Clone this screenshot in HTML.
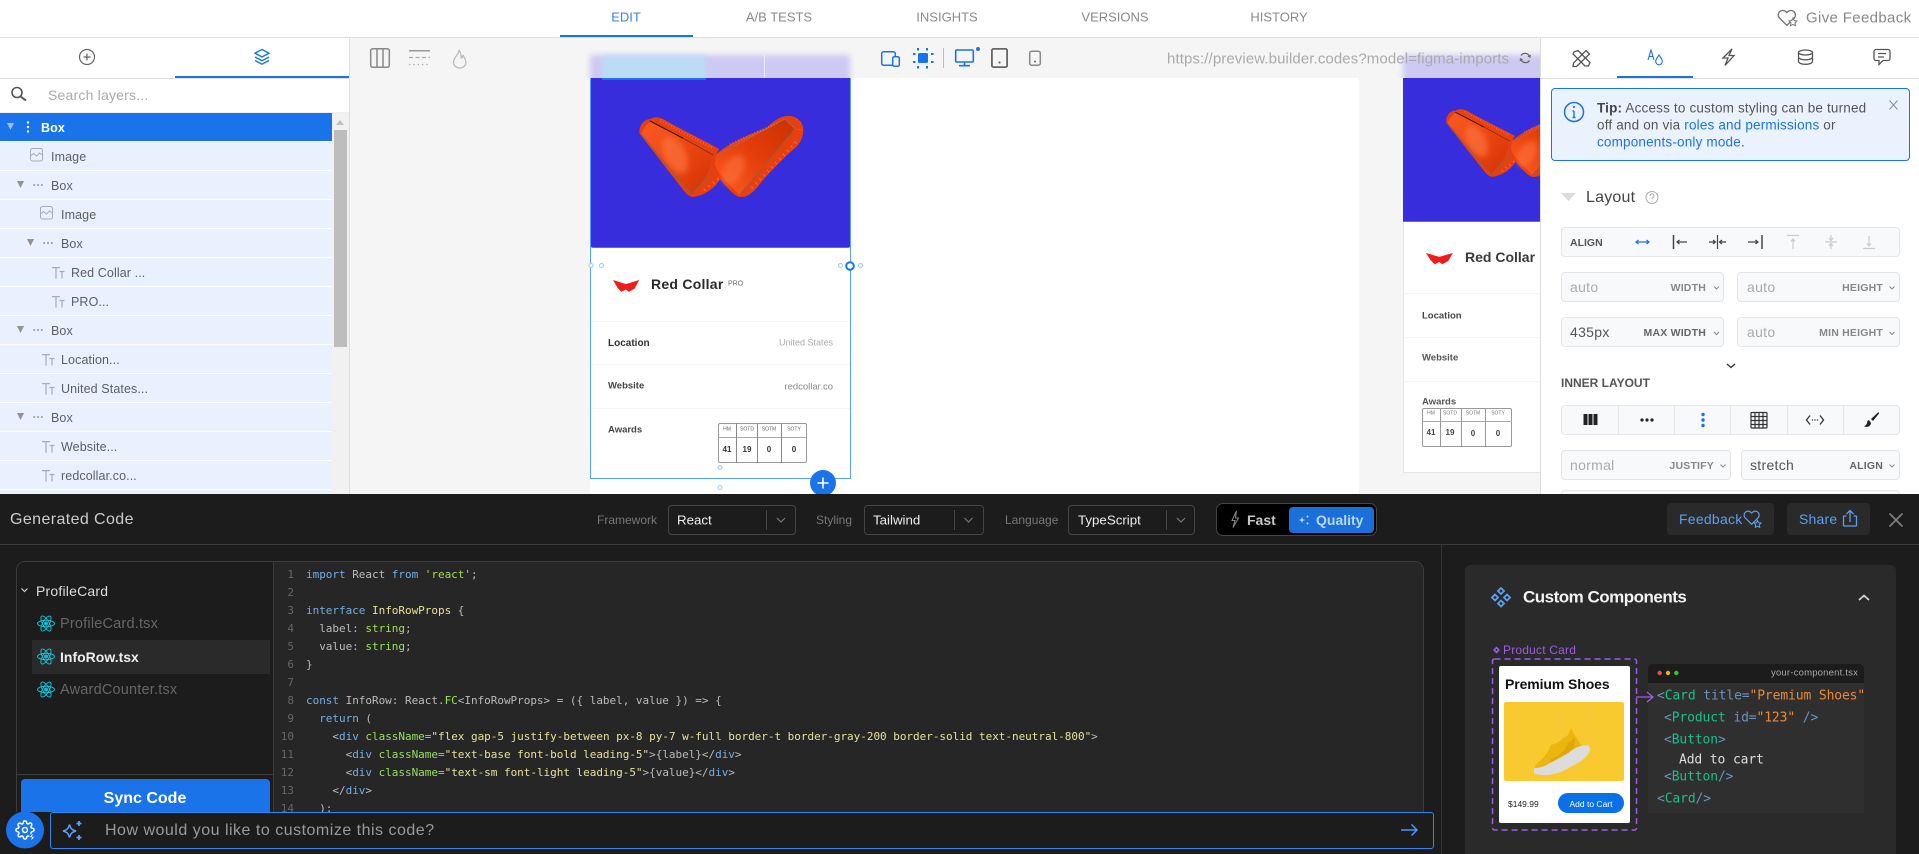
<!DOCTYPE html>
<html lang="en"><head><meta charset="utf-8"><title>Builder Editor</title>
<style>
*{box-sizing:border-box}
html,body{margin:0;padding:0;width:1919px;height:854px;overflow:hidden;background:#fff;font-family:"Liberation Sans",sans-serif}
.b{position:absolute}
.t{position:absolute;white-space:nowrap;line-height:1;transform:translateY(-50%)}
.r{transform:translate(-100%,-50%)}
.c{transform:translate(-50%,-50%)}
.tab{font-size:13px;color:#8a8a8a;top:17px}
.row{position:absolute;left:0;width:332px;height:28px;background:#e8f1fd}
.lt{font-size:12.5px;color:#5c5f66;letter-spacing:.1px}
.f{position:absolute;background:#f8f9fa;border:1px solid #e3e5e8;border-radius:4px}
.fv{font-size:14px;color:#aaa;letter-spacing:.3px}
.fl{font-size:10.5px;font-weight:bold;color:#888;letter-spacing:.2px}
.d{font-size:12px;color:#777}
.sel{position:absolute;top:505px;height:30px;border:1px solid #454545;border-radius:4px}
.sv{font-size:13.3px;color:#eee;top:520px}
pre{margin:0;font-family:"DejaVu Sans Mono",monospace;font-size:11px;line-height:18px;letter-spacing:-.025px}
.k{color:#72aee6}.s{color:#9fe24a}.y{color:#e8e09a}.g{color:#9adf5e}
.cd{font-family:"DejaVu Sans Mono",monospace;font-size:13px;letter-spacing:-.12px;color:#6f93b8}
.cg{color:#19c088}.co{color:#ea8a35}
</style></head><body>

<!-- top bar -->
<div class="b" style="left:0;top:37px;width:1919px;height:1px;background:#ddd"></div>
<div class="b" style="left:560px;top:35px;width:133px;height:2px;background:#1a73e8"></div>
<div class="t tab c" style="left:626px;color:#3a80e4">EDIT</div>
<div class="t tab c" style="left:779px">A/B TESTS</div>
<div class="t tab c" style="left:947px">INSIGHTS</div>
<div class="t tab c" style="left:1115px">VERSIONS</div>
<div class="t tab c" style="left:1279px">HISTORY</div>
<div class="t" style="left:1806px;top:18px;font-size:15px;color:#888;letter-spacing:.35px">Give Feedback</div>

<!-- left panel -->
<div class="b" style="left:0;top:38px;width:350px;height:456px;background:#fff;border-right:1px solid #ddd"></div>
<div class="b" style="left:0;top:78px;width:349px;height:1px;background:#ddd"></div>
<div class="b" style="left:175px;top:76px;width:174px;height:2px;background:#1a73e8"></div>
<div class="b" style="left:0;top:112px;width:349px;height:1px;background:#eee"></div>
<div class="t" style="left:48px;top:95px;font-size:14px;color:#aaa;letter-spacing:.2px">Search layers...</div>
<div class="b" style="left:332px;top:113px;width:17px;height:381px;background:#f1f1f1"></div>
<div class="b" style="left:334px;top:130px;width:13px;height:217px;background:#bdbdbd"></div>
<div class="row" style="top:113px;background:#1a73e8"></div>
<div class="row" style="top:142px"></div><div class="row" style="top:171px"></div><div class="row" style="top:200px"></div>
<div class="row" style="top:229px"></div><div class="row" style="top:258px"></div><div class="row" style="top:287px"></div>
<div class="row" style="top:316px"></div><div class="row" style="top:345px"></div><div class="row" style="top:374px"></div>
<div class="row" style="top:403px"></div><div class="row" style="top:432px"></div><div class="row" style="top:461px"></div>
<div class="row" style="top:490px;height:4px"></div>
<div class="t lt" style="left:41px;top:128px;color:#fff;font-weight:bold">Box</div>
<div class="t lt" style="left:51px;top:157px">Image</div>
<div class="t lt" style="left:51px;top:186px">Box</div>
<div class="t lt" style="left:61px;top:215px">Image</div>
<div class="t lt" style="left:61px;top:244px">Box</div>
<div class="t lt" style="left:71px;top:273px">Red Collar ...</div>
<div class="t lt" style="left:71px;top:302px">PRO...</div>
<div class="t lt" style="left:51px;top:331px">Box</div>
<div class="t lt" style="left:61px;top:360px">Location...</div>
<div class="t lt" style="left:61px;top:389px">United States...</div>
<div class="t lt" style="left:51px;top:418px">Box</div>
<div class="t lt" style="left:61px;top:447px">Website...</div>
<div class="t lt" style="left:61px;top:476px">redcollar.co...</div>

<!-- canvas -->
<div class="b" style="left:350px;top:38px;width:1190px;height:456px;background:#f5f5f5;overflow:hidden">
  <div class="b" style="left:240px;top:40px;width:769px;height:416px;background:#fff"></div>
  <!-- blurred toolbars -->
  <div class="b" style="left:0;top:0;width:1190px;height:40px;overflow:hidden">
    <div class="b" style="left:240px;top:17px;width:260px;height:40px;background:#ccc9f2;filter:blur(3px)"></div>
    <div class="b" style="left:252px;top:18px;width:104px;height:40px;background:#bcdcf5;filter:blur(3px)"></div>
    <div class="b" style="left:414px;top:16px;width:1px;height:24px;background:#eceaf9"></div>
    <div class="b" style="left:1053px;top:17px;width:160px;height:40px;background:#ccc9f2;filter:blur(3px)"></div>
  </div>
  <!-- main card -->
  <div class="b" style="left:240px;top:40px;width:261px;height:400px;background:#fff">
    <div class="b" style="left:0;top:0;width:261px;height:170px;background:#372ddd;border-bottom:1px solid #6a62e6;border-radius:0 0 3px 3px"></div>
    <div class="b" style="left:12px;top:0;width:104px;height:2px;background:#1a73e8"></div>
    <div class="b" style="left:0;top:243px;width:261px;height:1px;background:#f5f5f5"></div>
    <div class="b" style="left:0;top:286px;width:261px;height:1px;background:#f5f5f5"></div>
    <div class="b" style="left:0;top:330px;width:261px;height:1px;background:#f5f5f5"></div>
    <div class="t" style="left:61px;top:206px;font-size:14px;font-weight:bold;color:#2a2a2a;letter-spacing:.25px">Red Collar</div>
    <div class="t" style="left:138px;top:206px;font-size:7px;color:#666">PRO</div>
    <div class="t" style="left:18px;top:266px;font-size:10px;font-weight:bold;color:#333">Location</div>
    <div class="t r" style="left:243px;top:265px;font-size:9px;color:#aaa">United States</div>
    <div class="t" style="left:18px;top:308px;font-size:9.5px;font-weight:bold;color:#444">Website</div>
    <div class="t r" style="left:243px;top:309px;font-size:9.5px;color:#888">redcollar.co</div>
    <div class="t" style="left:18px;top:352px;font-size:9.5px;font-weight:bold;color:#444">Awards</div>
    <!-- table -->
    <div class="b" style="left:128px;top:345px;width:89px;height:40px;border:1px solid #999;border-radius:2px"></div>
    <div class="b" style="left:128px;top:359px;width:89px;height:1px;background:#aaa"></div>
    <div class="b" style="left:146px;top:345px;width:1px;height:40px;background:#888"></div>
    <div class="b" style="left:167px;top:345px;width:1px;height:40px;background:#888"></div>
    <div class="b" style="left:191px;top:345px;width:1px;height:40px;background:#888"></div>
    <div class="t c" style="left:137px;top:352px;font-size:5px;color:#666">HM</div>
    <div class="t c" style="left:157px;top:352px;font-size:5px;color:#666">SOTD</div>
    <div class="t c" style="left:179px;top:352px;font-size:5px;color:#666">SOTM</div>
    <div class="t c" style="left:204px;top:352px;font-size:5px;color:#666">SOTY</div>
    <div class="t c" style="left:137px;top:372px;font-size:8px;font-weight:bold;color:#333">41</div>
    <div class="t c" style="left:157px;top:372px;font-size:8px;font-weight:bold;color:#333">19</div>
    <div class="t c" style="left:179px;top:372px;font-size:8px;font-weight:bold;color:#333">0</div>
    <div class="t c" style="left:204px;top:372px;font-size:8px;font-weight:bold;color:#333">0</div>
    <div class="b" style="left:0;top:0;width:261px;height:401px;border:1px solid #5aa0ff;border-top:0"></div>
  </div>
  <!-- second card -->
  <div class="b" style="left:1053px;top:40px;width:240px;height:395px;background:#fff;border:1px solid #e6e6e6;border-top:0">
    <div class="b" style="left:-1px;top:0;width:240px;height:144px;background:#372ddd;border-bottom:1px solid #6a62e6"></div>
    <div class="b" style="left:0;top:215px;width:240px;height:1px;background:#f5f5f5"></div>
    <div class="b" style="left:0;top:259px;width:240px;height:1px;background:#f5f5f5"></div>
    <div class="b" style="left:0;top:303px;width:240px;height:1px;background:#f5f5f5"></div>
    <div class="t" style="left:61px;top:179px;font-size:14px;font-weight:bold;color:#3a3a3a">Red Collar</div>
    <div class="t" style="left:18px;top:238px;font-size:9.5px;font-weight:bold;color:#444">Location</div>
    <div class="t" style="left:18px;top:280px;font-size:9.5px;font-weight:bold;color:#555">Website</div>
    <div class="t" style="left:18px;top:324px;font-size:9.5px;font-weight:bold;color:#555">Awards</div>
    <div class="b" style="left:18px;top:330px;width:90px;height:39px;border:1px solid #999;border-radius:2px"></div>
    <div class="b" style="left:18px;top:343px;width:90px;height:1px;background:#aaa"></div>
    <div class="b" style="left:36px;top:330px;width:1px;height:39px;background:#999"></div>
    <div class="b" style="left:57px;top:330px;width:1px;height:39px;background:#999"></div>
    <div class="b" style="left:81px;top:330px;width:1px;height:39px;background:#999"></div>
    <div class="t c" style="left:27px;top:336px;font-size:5px;color:#777">HM</div>
    <div class="t c" style="left:46px;top:336px;font-size:5px;color:#777">SOTD</div>
    <div class="t c" style="left:69px;top:336px;font-size:5px;color:#777">SOTM</div>
    <div class="t c" style="left:94px;top:336px;font-size:5px;color:#777">SOTY</div>
    <div class="t c" style="left:27px;top:355px;font-size:8px;font-weight:bold;color:#444">41</div>
    <div class="t c" style="left:46px;top:355px;font-size:8px;font-weight:bold;color:#444">19</div>
    <div class="t c" style="left:69px;top:356px;font-size:8px;font-weight:bold;color:#444">0</div>
    <div class="t c" style="left:94px;top:356px;font-size:8px;font-weight:bold;color:#444">0</div>
  </div>
  <div class="t" style="left:817px;top:21px;font-size:15px;color:#aaa;letter-spacing:.1px">https://preview.builder.codes?model=figma-imports</div>
  <!-- canvas graphics -->
  <svg class="b" style="left:-350px;top:-38px" width="1919" height="854">
    <defs>
      <linearGradient id="og" x1="0" y1="0" x2="1" y2="1"><stop offset="0" stop-color="#fb5a24"/><stop offset=".55" stop-color="#ea440f"/><stop offset="1" stop-color="#cf3405"/></linearGradient>
      <linearGradient id="og2" x1="1" y1="0" x2="0" y2="1"><stop offset="0" stop-color="#c93204"/><stop offset=".45" stop-color="#e23c08"/><stop offset="1" stop-color="#ff5c22"/></linearGradient>
      <filter id="bl" x="-50%" y="-50%" width="200%" height="200%"><feGaussianBlur stdDeviation="9"/></filter>
      <g id="pillow" transform="translate(-8 -11) scale(.3333)">
        <path fill="#e8400c" d="M28 78C30 55 45 42 62 42C72 34 90 36 105 45C150 72 210 100 268 132C258 145 250 165 252 185C256 200 265 212 270 222C255 250 225 270 195 275C180 278 170 268 160 255L32 90C28 86 28 82 28 78Z"/>
        <path fill="url(#og)" d="M62 50L245 150C252 190 205 250 185 268L34 85C42 68 52 56 62 50Z"/>
        <ellipse cx="135" cy="150" rx="32" ry="60" transform="rotate(-28 135 150)" fill="#ff7e4a" opacity=".55" filter="url(#bl)"/>
        <path fill="#e8400c" d="M255 150C290 120 340 95 410 68C430 50 450 32 475 33C500 32 520 50 520 75C520 95 512 112 500 125C470 150 430 190 395 230C375 258 355 278 330 276C310 272 290 245 270 222C258 205 250 190 252 170Z"/>
        <path fill="url(#og2)" d="M258 155L465 42L495 72L328 270C300 240 262 205 254 178Z"/>
        <ellipse cx="310" cy="195" rx="28" ry="50" transform="rotate(30 310 195)" fill="#ff7a44" opacity=".5" filter="url(#bl)"/>
        <path fill="none" stroke="#241210" stroke-width="3" d="M60 48L160 100"/>
        <path fill="none" stroke="#6e3422" stroke-width="2.500" d="M160 100L250 150"/>
        <path fill="none" stroke="#8a6252" stroke-width="2.500" d="M30 85L185 268L255 192M495 72L328 270"/>
        <path fill="none" stroke="#9a7a6a" stroke-width="2.500" stroke-dasharray="4 2" d="M258 152L465 42L495 72L518 75"/>
        <path fill="none" stroke="#ffa27c" stroke-width="8" stroke-dasharray="2 7" opacity=".45" d="M92 46L250 130M300 118L440 55"/>
        <path fill="none" stroke="#ff8a5c" stroke-width="9" stroke-dasharray="3 14" opacity=".6" d="M498 112L365 250M265 222L215 262"/>
      </g>
      <g id="rc"><path fill="#ee1c1c" d="M0 0L34 12L69 0L57 25L42 35L34 28L22 35L12 23Z"/></g>
    </defs>
    <use href="#pillow" transform="translate(638 116)"/>
    <use href="#pillow" transform="translate(1445 108) scale(.86 .85)"/>
    <use href="#rc" transform="translate(613 280) scale(.38 .34)"/>
    <use href="#rc" transform="translate(1426 253) scale(.39 .32)"/>
    <g fill="#fff" stroke="#9cc7fb" stroke-width="1">
      <circle cx="591" cy="265.5" r="2"/><circle cx="601.5" cy="265.5" r="2"/><circle cx="840.5" cy="265.5" r="2"/><circle cx="860.5" cy="265.5" r="2"/><circle cx="720" cy="467.5" r="2"/><circle cx="720" cy="487.5" r="2"/>
    </g>
    <circle cx="850" cy="266" r="3.8" fill="#fff" stroke="#1a73e8" stroke-width="2"/>
    <circle cx="823" cy="483" r="13" fill="#1a73e8"/>
    <path d="M823 477.5v11M817.5 483h11" stroke="#fff" stroke-width="1.6"/>
  </svg>
</div>

<!-- right panel -->
<div class="b" style="left:1540px;top:38px;width:379px;height:456px;background:#fff;border-left:1px solid #ddd"></div>
<div class="b" style="left:1540px;top:78px;width:379px;height:1px;background:#ddd"></div>
<div class="b" style="left:1617px;top:76px;width:76px;height:2px;background:#1a73e8"></div>
<div class="b" style="left:1551px;top:88px;width:359px;height:73px;background:#eaf3fd;border:1px solid #1a73e8;border-radius:4px"></div>
<div class="t" style="left:1597px;top:108px;font-size:13.5px;color:#555;letter-spacing:.18px"><b style="color:#444">Tip:</b> Access to custom styling can be turned</div>
<div class="t" style="left:1597px;top:125px;font-size:13.5px;color:#555;letter-spacing:.18px">off and on via <span style="color:#1a73e8">roles and permissions</span> or</div>
<div class="t" style="left:1597px;top:142px;font-size:13.5px;color:#555;letter-spacing:.18px"><span style="color:#1a73e8">components-only mode</span>.</div>
<div class="t" style="left:1586px;top:198px;font-size:16px;color:#444;letter-spacing:.2px">Layout</div>
<div class="f" style="left:1561px;top:227px;width:339px;height:30px"></div>
<div class="t" style="left:1570px;top:243px;font-size:10.5px;font-weight:bold;color:#555">ALIGN</div>
<div class="f" style="left:1561px;top:272px;width:163px;height:30px"></div>
<div class="f" style="left:1737px;top:272px;width:163px;height:30px"></div>
<div class="f" style="left:1561px;top:317px;width:163px;height:30px"></div>
<div class="f" style="left:1737px;top:317px;width:163px;height:30px"></div>
<div class="t fv" style="left:1570px;top:287px">auto</div>
<div class="t fv" style="left:1747px;top:287px">auto</div>
<div class="t fv" style="left:1570px;top:332px;color:#555">435px</div>
<div class="t fv" style="left:1747px;top:332px">auto</div>
<div class="t fl r" style="left:1706px;top:288px">WIDTH</div>
<div class="t fl r" style="left:1883px;top:288px">HEIGHT</div>
<div class="t fl r" style="left:1706px;top:333px;color:#666">MAX WIDTH</div>
<div class="t fl r" style="left:1883px;top:333px">MIN HEIGHT</div>
<div class="t" style="left:1561px;top:383px;font-size:12px;font-weight:bold;color:#555">INNER LAYOUT</div>
<div class="f" style="left:1561px;top:405px;width:339px;height:30px"></div>
<div class="b" style="left:1618px;top:405px;width:1px;height:30px;background:#e3e5e8"></div>
<div class="b" style="left:1674px;top:405px;width:1px;height:30px;background:#e3e5e8"></div>
<div class="b" style="left:1730px;top:405px;width:1px;height:30px;background:#e3e5e8"></div>
<div class="b" style="left:1787px;top:405px;width:1px;height:30px;background:#e3e5e8"></div>
<div class="b" style="left:1843px;top:405px;width:1px;height:30px;background:#e3e5e8"></div>
<div class="f" style="left:1561px;top:450px;width:170px;height:30px"></div>
<div class="f" style="left:1741px;top:450px;width:159px;height:30px"></div>
<div class="t fv" style="left:1570px;top:465px">normal</div>
<div class="t fv" style="left:1750px;top:465px;color:#555">stretch</div>
<div class="t fl r" style="left:1714px;top:466px">JUSTIFY</div>
<div class="t fl r" style="left:1883px;top:466px;color:#666">ALIGN</div>
<div class="f" style="left:1561px;top:490px;width:339px;height:30px"></div>

<!-- dark panel -->
<div class="b" style="left:0;top:494px;width:1919px;height:360px;background:#1c1c1c;overflow:hidden">
  <div class="b" style="left:0;top:50px;width:1919px;height:1px;background:#3c3c3c"></div>
  <div class="b" style="left:1441px;top:50px;width:1px;height:310px;background:#333"></div>
  <div class="b" style="left:16px;top:67px;width:1408px;height:300px;background:#262626;border:1px solid #3c3c3c;border-radius:9px;overflow:hidden">
    <div class="b" style="left:0;top:0;width:257px;height:300px;background:#1c1c1c;border-right:1px solid #3c3c3c"></div>
    <div class="b" style="left:0;top:212px;width:257px;height:1px;background:#3c3c3c"></div>
    <div class="b" style="left:15px;top:78px;width:238px;height:34px;background:#2a2a2a"></div>
    <div class="b" style="left:4px;top:217px;width:249px;height:60px;background:#1a73e8;border-radius:4px"></div>
  </div>
  <div class="b" style="left:1465px;top:71px;width:431px;height:320px;background:#2a2a2a;border-radius:6px"></div>
  <!-- custom comp -->
  <div class="b" style="left:1499px;top:172px;width:131px;height:157px;background:#fff;border-radius:2px"></div>
  <div class="b" style="left:1504px;top:208px;width:120px;height:79px;background:#f9ca30;border-radius:2px"></div>
  <div class="b" style="left:1558px;top:299px;width:66px;height:20px;background:#0a6fe8;border-radius:10px"></div>
  <div class="b" style="left:1648px;top:170px;width:216px;height:149px;background:#2f2f2f;border-radius:5px 5px 0 0;overflow:hidden">
    <div class="b" style="left:0;top:0;width:216px;height:19px;background:#1c1c1c"></div>
  </div>
</div>

<div class="t" style="left:10px;top:520px;font-size:16px;color:#ccc;letter-spacing:.4px">Generated Code</div>
<div class="t d" style="left:597px;top:520px">Framework</div>
<div class="sel" style="left:668px;width:128px"></div>
<div class="t sv" style="left:677px">React</div>
<div class="t d" style="left:816px;top:520px">Styling</div>
<div class="sel" style="left:864px;width:120px"></div>
<div class="t sv" style="left:873px">Tailwind</div>
<div class="t d" style="left:1005px;top:520px">Language</div>
<div class="sel" style="left:1068px;width:127px"></div>
<div class="t sv" style="left:1078px">TypeScript</div>
<div class="b" style="left:766px;top:510px;width:1px;height:20px;background:#454545"></div>
<div class="b" style="left:954px;top:510px;width:1px;height:20px;background:#454545"></div>
<div class="b" style="left:1166px;top:510px;width:1px;height:20px;background:#454545"></div>
<div class="b" style="left:1216px;top:503px;width:161px;height:33px;background:#000;border:1px solid #444;border-radius:7px"></div>
<div class="b" style="left:1289px;top:507px;width:85px;height:26px;background:#1a6fd8;border-radius:4px"></div>
<div class="t" style="left:1247px;top:520px;font-size:14px;font-weight:bold;color:#c8c8c8">Fast</div>
<div class="t" style="left:1316px;top:520px;font-size:14px;font-weight:bold;color:#bcd4f2">Quality</div>
<div class="b" style="left:1667px;top:503px;width:107px;height:32px;background:#2a2a2a;border-radius:4px"></div>
<div class="b" style="left:1787px;top:503px;width:83px;height:32px;background:#2a2a2a;border-radius:4px"></div>
<div class="t" style="left:1679px;top:519px;font-size:14px;color:#5b9ff0;letter-spacing:.25px">Feedback</div>
<div class="t" style="left:1799px;top:519px;font-size:14px;color:#5b9ff0;letter-spacing:.2px">Share</div>

<div class="t" style="left:36px;top:591px;font-size:14px;color:#ddd;letter-spacing:.2px">ProfileCard</div>
<div class="t" style="left:60px;top:624px;font-size:14.5px;color:#666;letter-spacing:.2px">ProfileCard.tsx</div>
<div class="t" style="left:60px;top:657px;font-size:14px;font-weight:bold;color:#eee">InfoRow.tsx</div>
<div class="t" style="left:60px;top:690px;font-size:14.5px;color:#666;letter-spacing:.2px">AwardCounter.tsx</div>
<div class="t c" style="left:145px;top:799px;font-size:16px;font-weight:bold;color:#fff">Sync Code</div>

<pre class="b" style="left:270px;top:566px;width:24px;text-align:right;color:#666">1
2
3
4
5
6
7
8
9
10
11
12
13
14</pre>
<pre class="b" style="left:306px;top:566px;color:#bbb;height:246px;overflow:hidden"><span class="k">import</span> React <span class="k">from</span> <span class="s">'react'</span>;

<span class="k">interface</span> <span class="y">InfoRowProps</span> {
  label: <span class="s">string</span>;
  value: <span class="s">string</span>;
}

<span class="k">const</span> InfoRow: React.<span class="s">FC</span>&lt;InfoRowProps&gt; = ({ label, value }) =&gt; {
  <span class="k">return</span> (
    &lt;<span class="k">div</span> <span class="g">className</span>=<span class="y">"flex gap-5 justify-between px-8 py-7 w-full border-t border-gray-200 border-solid text-neutral-800"</span>&gt;
      &lt;<span class="k">div</span> <span class="g">className</span>=<span class="y">"text-base font-bold leading-5"</span>&gt;{label}&lt;/<span class="k">div</span>&gt;
      &lt;<span class="k">div</span> <span class="g">className</span>=<span class="y">"text-sm font-light leading-5"</span>&gt;{value}&lt;/<span class="k">div</span>&gt;
    &lt;/<span class="k">div</span>&gt;
  );</pre>

<!-- input bar -->
<div class="b" style="left:0;top:812px;width:1441px;height:42px;background:#1c1c1c"></div>
<div class="b" style="left:50px;top:812px;width:1384px;height:37px;background:#1c1c1c;border:1px solid #2f86ee;border-radius:3px"></div>
<div class="t" style="left:105px;top:831px;font-size:16px;color:#9a9a9a;letter-spacing:.5px">How would you like to customize this code?</div>

<!-- custom comps text -->
<div class="t" style="left:1523px;top:597px;font-size:17px;font-weight:bold;color:#f2f2f2;letter-spacing:-.5px">Custom Components</div>
<div class="t" style="left:1503px;top:650px;font-size:12px;color:#9b5de5;letter-spacing:.2px">Product Card</div>
<div class="t" style="left:1505px;top:684px;font-size:14px;font-weight:bold;color:#111;letter-spacing:-.1px">Premium Shoes</div>
<div class="t" style="left:1508px;top:804px;font-size:8.5px;color:#222">$149.99</div>
<div class="t c" style="left:1591px;top:804px;font-size:8.5px;color:#fff">Add to Cart</div>
<div class="t" style="left:1771px;top:673px;font-size:9.5px;color:#aaa;letter-spacing:.2px">your-component.tsx</div>
<div class="t cd" style="left:1657px;top:696px">&lt;<span class="cg">Card</span> title=<span class="co">"Premium Shoes"</span></div>
<div class="t cd" style="left:1664px;top:718px">&lt;<span class="cg">Product</span> id=<span class="co">"123"</span> /&gt;</div>
<div class="t cd" style="left:1664px;top:740px">&lt;<span class="cg">Button</span>&gt;</div>
<div class="t cd" style="left:1679px;top:760px;color:#ddd">Add to cart</div>
<div class="t cd" style="left:1664px;top:777px">&lt;<span class="cg">Button</span>/&gt;</div>
<div class="t cd" style="left:1657px;top:799px">&lt;<span class="cg">Card</span>/&gt;</div>

<!-- icons -->
<svg class="b" style="left:0;top:0" width="1919" height="854" fill="none">
  <defs>
    <g id="tri"><path fill="#939393" stroke="none" d="M0 0h7l-3.5 7z"/></g>
    <g id="dh" fill="#999"><circle cx="1.2" cy="0" r="1"/><circle cx="5" cy="0" r="1"/><circle cx="8.8" cy="0" r="1"/></g>
    <g id="im"><rect x=".5" y=".5" width="12" height="12.5" rx="2" stroke="#a8adb5"/><path d="M.5 8l3-2.5 3 2.5 3-3 3 2" stroke="#a8adb5"/></g>
    <g id="tt"><path stroke="#a8adb5" stroke-width="1.2" d="M0 .6h8M4 .6v11M7.5 4.5h5M10 4.5v7"/></g>
    <g id="atom" stroke="#14bdd4" stroke-width="1"><ellipse rx="8.5" ry="3.2"/><ellipse rx="8.5" ry="3.2" transform="rotate(60)"/><ellipse rx="8.5" ry="3.2" transform="rotate(120)"/><circle r="1.5" fill="#14bdd4"/></g>
    <path id="heart" d="M20.84 4.61a5.5 5.5 0 0 0-7.78 0L12 5.67l-1.06-1.06a5.5 5.5 0 0 0-7.78 7.78l1.06 1.06L12 21.23l7.78-7.78 1.06-1.06a5.5 5.5 0 0 0 0-7.78z"/>
    <path id="star" d="M0-4l1.2 2.6 2.8.3-2 2 .5 2.8L0 2.4-2.5 3.700l.5-2.800-2-2 2.800-.3z"/>
  </defs>

  <!-- left panel tabs -->
  <circle cx="87" cy="57" r="7.5" stroke="#666" stroke-width="1.2"/><path d="M87 53.500v7M83.500 57h7" stroke="#666" stroke-width="1.2"/>
  <g stroke="#1a73e8" stroke-width="1.4"><path d="M262 49.500l7 3.700-7 3.700-7-3.700z"/><path d="M255 57l7 3.700 7-3.700M255 60.500l7 3.700 7-3.700"/></g>
  <circle cx="17" cy="92.500" r="5" stroke="#555" stroke-width="1.6"/><path d="M20.500 96.500L26 100.500" stroke="#555" stroke-width="2"/>
  <path fill="#c0c0c0" d="M336 125l4-5 4 5z"/>
  <!-- tree icons -->
  <path fill="#9cc0f2" d="M7 123h7l-3.500 7z"/>
  <g fill="#fff"><circle cx="28" cy="122.500" r="1.200"/><circle cx="28" cy="127" r="1.200"/><circle cx="28" cy="131.500" r="1.200"/></g>
  <use href="#im" x="30" y="148"/>
  <use href="#tri" x="17" y="181"/><use href="#dh" x="33" y="185"/>
  <use href="#im" x="40" y="206"/>
  <use href="#tri" x="27" y="239"/><use href="#dh" x="43" y="243"/>
  <use href="#tt" x="52" y="267"/><use href="#tt" x="52" y="296"/>
  <use href="#tri" x="17" y="326"/><use href="#dh" x="33" y="330"/>
  <use href="#tt" x="42" y="354"/><use href="#tt" x="42" y="383"/>
  <use href="#tri" x="17" y="413"/><use href="#dh" x="33" y="417"/>
  <use href="#tt" x="42" y="441"/><use href="#tt" x="42" y="470"/>

  <!-- canvas toolbar -->
  <rect x="370.700" y="48.700" width="18.600" height="18.600" rx="2" stroke="#888" stroke-width="1.500"/><path d="M377 49v18M383 49v18" stroke="#888" stroke-width="1.500"/>
  <path d="M409 50.700h21" stroke="#999" stroke-width="1.500"/><path d="M409 57.500h21" stroke="#aaa" stroke-width="1.200" stroke-dasharray="4 2.500"/><path d="M409 64.500h21" stroke="#aaa" stroke-width="1.200" stroke-dasharray="1.300 3"/>
  <path d="M459 50c.5 4-5.500 7-5.500 12.500a6.200 5.500 0 0 0 12.400 0c0-3-1.900-5-2.900-7.500c-.2 2-1 2.800-1.800 3c.2-3-.9-6-2.200-8z" stroke="#bbb" stroke-width="1.300"/>
  <g stroke="#1a73e8" stroke-width="1.500"><rect x="881.700" y="51.700" width="13.600" height="13.600" rx="2"/><rect x="892.700" y="56.700" width="6.600" height="9.600" rx="1.500" fill="#f5f5f5"/></g>
  <rect x="918" y="53" width="10" height="10" rx="1.500" fill="#1a73e8"/>
  <g fill="#1a73e8"><rect x="917" y="48" width="2" height="2.500"/><rect x="926" y="48" width="2" height="2.500"/><rect x="917" y="66" width="2" height="2.500"/><rect x="926" y="66" width="2" height="2.500"/><rect x="913" y="53" width="2.500" height="2"/><rect x="913" y="61" width="2.500" height="2"/><rect x="931" y="53" width="2.500" height="2"/><rect x="931" y="61" width="2.500" height="2"/></g>
  <path d="M943.500 48v20" stroke="#bbb"/>
  <rect x="955.700" y="50" width="17.600" height="12" rx="1" stroke="#1a73e8" stroke-width="1.600"/><path d="M964.500 62v3.500M959 65.700h11" stroke="#1a73e8" stroke-width="1.600"/><circle cx="978" cy="49" r="2" fill="#1a73e8"/>
  <rect x="991.900" y="48.900" width="15.200" height="18.200" rx="1.500" stroke="#666" stroke-width="1.800"/><circle cx="999.500" cy="62.500" r="1.100" fill="#666"/>
  <rect x="1029.700" y="51.200" width="10.600" height="14" rx="2" stroke="#888" stroke-width="1.500"/><circle cx="1035" cy="61.500" r="1" fill="#666"/>
  <path d="M1521 55.500a4.800 4.800 0 0 1 8.500 1M1529.500 60.500a4.800 4.800 0 0 1-8.500-1" stroke="#666" stroke-width="1.300"/><path fill="#666" d="M1530.800 54.500l-.3 3.500-3-1.500zM1519.700 61.500l.3-3.500 3 1.500z"/>

  <!-- give feedback -->
  <use href="#heart" transform="translate(1777 8) scale(.82)" stroke="#777" stroke-width="1.700"/>
  <use href="#star" transform="translate(1793 22) scale(1)" fill="#fff" stroke="#777" stroke-width="1"/>

  <!-- right tabs -->
  <g stroke="#555" stroke-width="1.300"><path d="M1574 52l4-1.500 12 12-1.500 3.500-3.500 0-12-12z"/><path d="M1586 50.500l3.500 3.500-13 12.500-3.500 0 .5-3.500z"/></g>
  <g stroke="#1a73e8" stroke-width="1.100"><path d="M1648 60l3-10 3 10M1649 56.500h4"/><path d="M1659 55c-2 3-3.300 4.500-3.300 6.300a3.300 3.500 0 0 0 6.600 0c0-1.800-1.300-3.300-3.300-6.300z"/></g>
  <path d="M1732 49l-9 9h5l-3 7.500 9-10h-5z" stroke="#555" stroke-width="1.300"/>
  <g stroke="#555" stroke-width="1.300"><ellipse cx="1805.500" cy="52.500" rx="7" ry="2.500"/><path d="M1798.500 52.500v9c0 1.500 3 2.800 7 2.800s7-1.300 7-2.800v-9M1798.500 57c0 1.500 3 2.800 7 2.800s7-1.300 7-2.800"/></g>
  <path d="M1876 49.500h12a2 2 0 0 1 2 2v7a2 2 0 0 1-2 2h-5l-4 4v-4h-3a2 2 0 0 1-2-2v-7a2 2 0 0 1 2-2zM1878 53.500h8M1878 57h6" stroke="#555" stroke-width="1.300"/>

  <!-- tip -->
  <circle cx="1574" cy="112" r="9.500" stroke="#1a73e8" stroke-width="1.500"/><path d="M1574 111v6.500M1572.500 111h1.500M1572.500 117.500h3" stroke="#1a73e8" stroke-width="1.400"/><circle cx="1574" cy="107" r="1.100" fill="#1a73e8"/>
  <path d="M1889.500 100.500l8 9M1897.500 100.500l-8 9" stroke="#8a8f99" stroke-width="1"/>
  <!-- layout -->
  <path fill="#dcdcdc" d="M1561 193h15l-7.500 8z"/>
  <circle cx="1652" cy="197.500" r="6" stroke="#aaa"/><path d="M1650 196c0-3 4-3 4 0 0 1.500-2 1.500-2 3M1652 200.500v1" stroke="#aaa"/>
  <!-- align row -->
  <g stroke="#1a73e8" stroke-width="1.200"><path d="M1636 242h13M1638.500 240l-2.500 2 2.500 2M1646.500 240l2.500 2-2.500 2"/></g>
  <g stroke="#444" stroke-width="1.200"><path d="M1673.500 235v14" stroke-width="1.500"/><path d="M1677 242h10M1679.500 240l-2.500 2 2.500 2"/><path d="M1717.500 235v14M1709 242h6M1713 240l2.500 2-2.500 2M1726 242h-6M1722 240l-2.500 2 2.500 2"/><path d="M1762 235v14" stroke-width="1.500"/><path d="M1748 242h10M1755.500 240l2.500 2-2.500 2"/></g>
  <g stroke="#ccc" stroke-width="1.200"><path d="M1787 235.500h12M1793 239v10M1791 241.500l2-2.500 2 2.500M1825 242h12M1831 235v5M1829 238l2 2.500 2-2.500M1831 249v-5M1829 246l2-2.500 2 2.500M1863 248.500h12M1869 236v10M1867 243.500l2 2.500 2-2.500"/></g>
  <!-- chevs -->
  <g stroke="#888" stroke-width="1"><path d="M1714 286.500l2.500 2.500 2.500-2.500M1889.500 286.500l2.500 2.500 2.500-2.500M1714 332l2.500 2.500 2.500-2.500M1889.500 332l2.500 2.500 2.500-2.500M1720.500 464.500l2.500 2.500 2.500-2.500M1889.500 464.500l2.500 2.500 2.500-2.500"/></g>
  <path d="M1727 364l4 3.500 4-3.500" stroke="#333" stroke-width="1.300"/>
  <!-- inner layout icons -->
  <g fill="#222"><rect x="1583.500" y="414" width="4" height="11"/><rect x="1588.500" y="414" width="4" height="11"/><rect x="1593.500" y="414" width="4" height="11"/><circle cx="1642" cy="420" r="1.600"/><circle cx="1647" cy="420" r="1.600"/><circle cx="1652" cy="420" r="1.600"/></g>
  <g fill="#1a73e8"><circle cx="1703" cy="414.500" r="1.700"/><circle cx="1703" cy="420" r="1.700"/><circle cx="1703" cy="425.500" r="1.700"/></g>
  <g stroke="#333" stroke-width="1.200"><rect x="1751" y="412.500" width="16" height="15.500" rx="1"/><path d="M1755 412.500v15.500M1759 412.500v15.500M1763 412.500v15.500M1751 416.500h16M1751 420.500h16M1751 424.500h16"/></g>
  <path d="M1810 415.500l-3.500 4.500 3.500 4.500M1820 415.500l3.500 4.500-3.500 4.500" stroke="#333" stroke-width="1.300"/>
  <g fill="#333"><circle cx="1812.500" cy="420" r=".7"/><circle cx="1815" cy="420" r=".7"/><circle cx="1817.500" cy="420" r=".7"/></g>
  <path fill="#222" d="M1878 412.500l-7 6.500 2 2 6-7.500c.4-.6-.4-1.500-1-1zM1869 420c-2.500.5-1.500 4-3 5l-2 1.500c3 1 6.500.3 7-3.500z"/>

  <!-- dark header -->
  <path d="M777 518l4 4 4-4M964.500 518l4 4 4-4M1177 518l4 4 4-4" stroke="#777" stroke-width="1.200"/>
  <path d="M1236.500 511l-4.500 9.500h3l-2 7 5.500-9.500h-3z" stroke="#888" stroke-width="1"/>
  <g fill="#bcd4f2"><path d="M1302 516.500c.5 2.500 1 3 3.500 3.500-2.500.5-3 1-3.500 3.500-.5-2.500-1-3-3.500-3.500 2.500-.5 3-1 3.500-3.500z"/><circle cx="1307.500" cy="516.500" r="1"/><circle cx="1307.500" cy="523.500" r="1"/></g>
  <use href="#heart" transform="translate(1743 509) scale(.72)" stroke="#5b9ff0" stroke-width="1.700"/>
  <use href="#star" transform="translate(1757.500 524) scale(.9)" fill="#2a2a2a" stroke="#5b9ff0" stroke-width="1.100"/>
  <path d="M1846.500 516h-2.500a.8.8 0 0 0-.5.500v9a.8.8 0 0 0 .5.500h12a.8.8 0 0 0 .5-.500v-9a.8.8 0 0 0-.5-.500h-2.500M1850 522v-11.500M1846.500 514l3.500-3.500 3.500 3.500" stroke="#5b9ff0" stroke-width="1.300"/>
  <path d="M1889.500 513.500l13 13M1902.500 513.500l-13 13" stroke="#7f7f7f" stroke-width="1.600"/>

  <!-- tree -->
  <path d="M21.500 588.500l3 3 3-3" stroke="#ccc" stroke-width="1.200"/>
  <use href="#atom" transform="translate(46 623.500)"/><use href="#atom" transform="translate(46 656.500)"/><use href="#atom" transform="translate(46 689.500)"/>

  <!-- input -->
  <ellipse cx="25" cy="830" rx="19" ry="18.500" fill="#1a73e8"/>
  <g transform="translate(15 820) scale(.83)" stroke="#fff" stroke-width="1.800">
    <path d="M12 15a3 3 0 1 0 0-6 3 3 0 0 0 0 6z"/>
    <path d="M19.400 15a1.650 1.650 0 0 0 .33 1.820l.06.06a2 2 0 0 1 0 2.830 2 2 0 0 1-2.830 0l-.06-.06a1.650 1.650 0 0 0-1.820-.33 1.650 1.650 0 0 0-1 1.510V21a2 2 0 0 1-2 2 2 2 0 0 1-2-2v-.09A1.650 1.650 0 0 0 9 19.400a1.650 1.650 0 0 0-1.820.33l-.06.06a2 2 0 0 1-2.830 0 2 2 0 0 1 0-2.830l.06-.06a1.650 1.650 0 0 0 .33-1.820 1.650 1.650 0 0 0-1.510-1H3a2 2 0 0 1-2-2 2 2 0 0 1 2-2h.09A1.650 1.650 0 0 0 4.600 9a1.650 1.650 0 0 0-.33-1.820l-.06-.06a2 2 0 0 1 0-2.830 2 2 0 0 1 2.830 0l.06.06a1.650 1.650 0 0 0 1.820.33H9a1.650 1.650 0 0 0 1-1.510V3a2 2 0 0 1 2-2 2 2 0 0 1 2 2v.09a1.650 1.650 0 0 0 1 1.510 1.650 1.650 0 0 0 1.820-.33l.06-.06a2 2 0 0 1 2.830 0 2 2 0 0 1 0 2.830l-.06.06a1.650 1.650 0 0 0-.33 1.820V9a1.650 1.650 0 0 0 1.510 1H21a2 2 0 0 1 2 2 2 2 0 0 1-2 2h-.09a1.650 1.650 0 0 0-1.510 1z"/>
  </g>
  <path fill="#fff" stroke="#1a73e8" stroke-width=".8" d="M33.500 832l-4.500 5.500h2.500l-1 4.500 4.500-5.500H32.500z"/>
  <path d="M69.500 824.500c1 4 2.500 5.500 6.500 6.500-4 1-5.500 2.500-6.500 6.500-1-4-2.500-5.500-6.500-6.500 4-1 5.500-2.500 6.500-6.500z" stroke="#5aa0ff" stroke-width="1.500"/>
  <path d="M79 821v5M76.500 823.500h5M79 835v5M76.500 837.500h5" stroke="#5aa0ff" stroke-width="1.800"/>
  <path d="M1401 830h16M1411.500 824.500l5.500 5.500-5.500 5.500" stroke="#3f9aff" stroke-width="1.500"/>

  <!-- custom comp -->
  <g stroke="#5b9ff0" stroke-width="1.800"><path d="M1501 588l3 3-3 3-3-3zM1495 594.500l3 3-3 3-3-3zM1507 594.500l3 3-3 3-3-3zM1501 600.500l3 3-3 3-3-3z"/></g>
  <path d="M1859 600l5-4.500 5 4.500" stroke="#ddd" stroke-width="1.600"/>
  <path fill="#9b5de5" d="M1496.500 646.500l3.500 3.500-3.500 3.500-3.500-3.500z"/><circle cx="1496.500" cy="650" r="1" fill="#2a2a2a"/>
  <rect x="1492.500" y="659" width="144" height="171" rx="2" stroke="#9b5de5" stroke-width="1.500" stroke-dasharray="6 4"/>
  <path d="M1636 697h16M1647 692l6 5-6 5" stroke="#9b5de5" stroke-width="1.300"/>
  <circle cx="1659.700" cy="673" r="2.200" fill="#ee4d4d"/><circle cx="1668" cy="673" r="2.200" fill="#f5a623"/><circle cx="1676.300" cy="673" r="2.200" fill="#27c93f"/>
  <!-- shoe -->
  <path d="M1566 707c-4 6-8 10-8 15s1 8 2 8M1591 706c-1 8-4 14-9 20" stroke="#e8c45a" stroke-width=".6"/>
  <path fill="#ecb60f" d="M1535 766c3-4 9-8 12-13l4-8 3-1c3-1 6-3 8-5 3-2 5-3 6-4l3-7 3 6 4 6c2 4 6 8 11 12l-17 10-20 10-15 1z"/>
  <path fill="#dda80a" d="M1550 763l10-6 8-4 6-6 1-10-4 4-3 2-3 6-6 6-8 4z"/>
  <path fill="#dcdcdc" d="M1534 768c5 0 10-1 16-5 8-4 16-8 24-14 5-3 11-5 15-3l1 4c-1 4-4 7-9 11-5 3-10 6-16 9-4 2-10 4-17 5-6 0-12 0-14-2z"/>
</svg>
</body></html>
